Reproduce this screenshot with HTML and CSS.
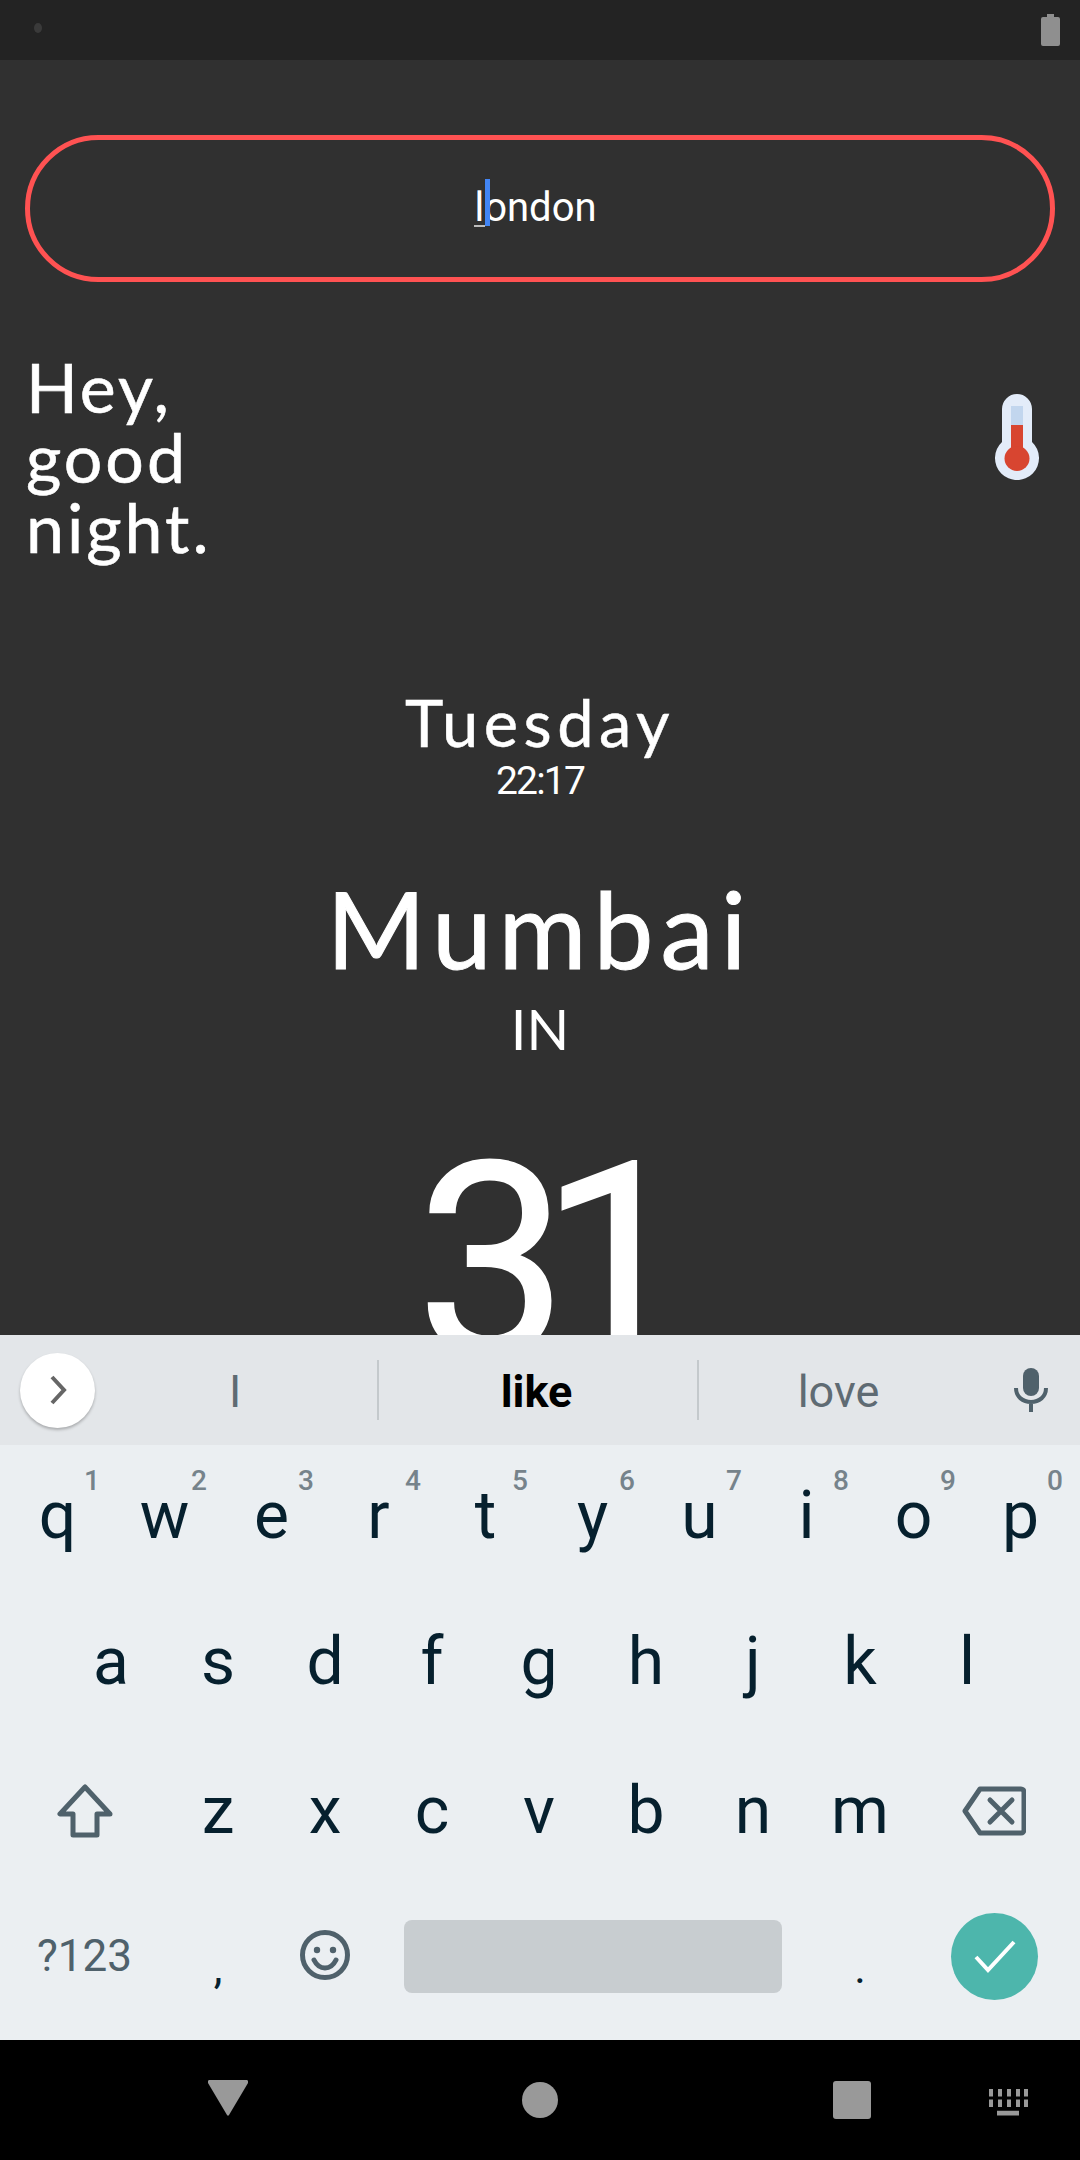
FILE: index.html
```html
<!DOCTYPE html>
<html lang="en">
<head>
<meta charset="utf-8">
<title>Weather</title>
<link rel="stylesheet" href="styles.css">
</head>
<body>
<div class="screen">
  <header class="status">
    <span class="status-dot"></span>
    <svg class="battery" viewBox="0 0 19 32"><path d="M6 0h7v3h4a2 2 0 0 1 2 2v25a2 2 0 0 1-2 2H2a2 2 0 0 1-2-2V5a2 2 0 0 1 2-2h4z"/></svg>
  </header>
  <main class="app">
    <div class="search">
      <span class="search-text"><span class="composing">l<i class="caret"></i></span>ondon</span>
    </div>
    <section class="greeting">
      <h1 class="hello">Hey,<br>good<br>night.</h1>
      <svg class="thermo" viewBox="0 0 44 86">
        <path class="th-case" d="M7 48V15a15 15 0 0 1 30 0v33a22 22 0 1 1-30 0z"/>
        <rect class="th-glass" x="16" y="12" width="12" height="20"/>
        <rect class="th-red" x="16" y="31" width="12" height="30"/>
        <circle class="th-red" cx="22" cy="64.500" r="12.500"/>
      </svg>
    </section>
    <div class="day">Tuesday</div>
    <div class="time">22:17</div>
    <div class="city">Mumbai</div>
    <div class="country">IN</div>
    <div class="temp">31</div>
  </main>
  <section class="keyboard">
    <div class="strip">
      <span class="more"><svg class="chev" viewBox="0 0 18 30"><path d="M3 2l12 13L3 28"/></svg></span>
      <span class="sugg sugg-a">I</span>
      <span class="sugg sugg-b">like</span>
      <span class="sugg sugg-c">love</span>
      <span class="mic-cell"><svg class="mic" viewBox="0 0 34 44"><rect x="9" y="0" width="16" height="28" rx="8"/><path class="mic-arc" d="M2 20c0 9 7 14 15 14s15-5 15-14M17 34v10"/></svg></span>
    </div>
    <div class="keys">
      <div class="row row-1">
        <span class="key">q<b class="hint">1</b></span><span class="key">w<b class="hint">2</b></span><span class="key">e<b class="hint">3</b></span><span class="key">r<b class="hint">4</b></span><span class="key">t<b class="hint">5</b></span><span class="key">y<b class="hint">6</b></span><span class="key">u<b class="hint">7</b></span><span class="key">i<b class="hint">8</b></span><span class="key">o<b class="hint">9</b></span><span class="key">p<b class="hint">0</b></span>
      </div>
      <div class="row row-2">
        <span class="key">a</span><span class="key">s</span><span class="key">d</span><span class="key">f</span><span class="key">g</span><span class="key">h</span><span class="key">j</span><span class="key">k</span><span class="key">l</span>
      </div>
      <div class="row row-3">
        <span class="key key-wide"><svg class="shift" viewBox="0 0 56 54"><path d="M28 3L3 30h13v21h24V30h13z"/></svg></span>
        <span class="key">z</span><span class="key">x</span><span class="key">c</span><span class="key">v</span><span class="key">b</span><span class="key">n</span><span class="key">m</span>
        <span class="key key-wide"><svg class="back" viewBox="0 0 64 50"><path class="ln" d="M18 3h41a3 3 0 0 1 3 3v38a3 3 0 0 1-3 3H18L3 25z"/><path class="ln" d="M28 14l22 22M50 14L28 36"/></svg></span>
      </div>
      <div class="row row-4">
        <span class="key key-wide key-sym">?123</span>
        <span class="key key-punct">,</span>
        <span class="key"><svg class="emoji" viewBox="0 0 50 50"><circle class="ln" cx="25" cy="25" r="22.500"/><circle class="eye" cx="17" cy="20" r="3.200"/><circle class="eye" cx="33" cy="20" r="3.200"/><path class="ln" d="M14 30c3 6 7 8 11 8s8-2 11-8"/></svg></span>
        <span class="space-cell"><span class="spacebar"></span></span>
        <span class="key key-punct">.</span>
        <span class="key key-wide key-enter"><span class="enter"><svg class="check" viewBox="0 0 44 36"><path d="M3 19l12 13L41 4"/></svg></span></span>
      </div>
    </div>
  </section>
  <nav class="navbar">
    <svg class="nav-back" viewBox="0 0 40 36"><path d="M2 0h36a2 2 0 0 1 2 3L21 35a1.200 1.200 0 0 1-2 0L0 3a2 2 0 0 1 2-3z"/></svg>
    <span class="nav-home"></span>
    <span class="nav-recent"></span>
    <svg class="nav-kbd" viewBox="0 0 39 27"><path d="M0 0h4v8H0zM9 0h4v8H9zM18 0h4v8h-4zM27 0h4v8h-4zM35 0h4v8h-4zM0 11h4v8H0zM9 11h4v8H9zM18 11h4v8h-4zM27 11h4v8h-4zM35 11h4v8h-4zM8 23h22v5H8z" transform="scale(1 .95)"/></svg>
  </nav>
</div>
</body>
</html>
```
FILE: styles.css
```css
* { box-sizing: border-box; }
html, body { margin: 0; padding: 0; }
body { width: 1080px; height: 2160px; overflow: hidden; background: #303030; }
.screen { width: 1080px; height: 2160px; display: flex; flex-direction: column; font-family: Roboto, sans-serif; }

.status { height: 60px; flex: none; background: #232323; display: flex; align-items: center; justify-content: space-between; padding: 0 20px 0 34px; }
.status-dot { width: 8px; height: 10px; border-radius: 50%; background: #3a3a3a; margin-bottom: 4px; }
.battery { width: 19px; height: 32px; fill: #8f8f8f; margin-bottom: 1px; }

.app { height: 1275px; flex: none; overflow: hidden; background: #303030; color: #fff; display: flex; flex-direction: column; align-items: center; padding-top: 75px; }
.search { width: 1030px; height: 147px; flex: none; border: 5px solid #ff5252; border-radius: 74px; display: flex; align-items: center; justify-content: center; padding: 0 9px 0 0; }
.search-text { font-size: 40px; line-height: 48px; margin-top: -1px; }
.composing { position: relative; display: inline-block; }
.composing::after { content: ""; position: absolute; left: 0; right: -1px; bottom: 5px; height: 2px; background: #bdbdbd; }
.caret { position: absolute; right: -6px; top: -5px; width: 5px; height: 47px; background: #4285f4; }

.greeting { width: 100%; flex: none; display: flex; justify-content: space-between; padding: 70px 41px 0 26px; }
.hello { margin: 0; font-family: Lato, sans-serif; font-weight: 400; font-size: 68px; line-height: 70px; letter-spacing: 3px; -webkit-text-stroke: 0.6px #fff; }
.thermo { width: 44px; height: 86px; margin-top: 42px; }
.th-case { fill: #e3ecf9; }
.th-glass { fill: #c2d6ee; }
.th-red { fill: #d84530; }

.day { font-family: Lato, sans-serif; font-size: 65px; line-height: 70px; letter-spacing: 5.5px; margin-top: 125px; -webkit-text-stroke: 0.5px #fff; }
.time { font-size: 39px; line-height: 44px; letter-spacing: -1.8px; margin-top: 2px; }
.city { font-family: Lato, sans-serif; font-size: 107px; line-height: 120px; letter-spacing: 7px; margin-top: 65px; -webkit-text-stroke: 1px #fff; }
.country { font-family: Lato, sans-serif; font-size: 56px; line-height: 60px; margin-top: 11px; }
.temp { font-size: 270px; line-height: 300px; margin-top: 53px; letter-spacing: -28px; -webkit-text-stroke: 2px #fff; }

.keyboard { height: 705px; flex: none; background: #ebeff2; display: flex; flex-direction: column; }
.strip { height: 110px; flex: none; background: #e3e6e9; display: flex; align-items: center; }
.more { width: 75px; height: 75px; flex: none; margin-left: 20px; border-radius: 50%; background: #fff; box-shadow: 0 2px 3px rgba(0,0,0,.25); display: flex; align-items: center; justify-content: center; }
.chev { width: 18px; height: 30px; fill: none; stroke: #666; stroke-width: 4; }
.sugg { height: 60px; display: flex; align-items: center; justify-content: center; font-size: 45px; line-height: 60px; color: #5f6b73; padding: 3px 2px 0 0; }
.sugg-a { width: 284px; border-right: 2px solid #c4c9cc; }
.sugg-b { width: 320px; border-right: 2px solid #c4c9cc; color: #000; font-weight: 700; padding-right: 3px; }
.sugg-c { width: 282px; padding-right: 3px; }
.mic-cell { flex: 1; display: flex; justify-content: center; }
.mic { width: 34px; height: 44px; fill: #4f616b; }
.mic-arc { fill: none; stroke: #4f616b; stroke-width: 4; }

.keys { flex: 1; padding: 0 6px 0 4px; color: #06202e; font-size: 66px; }
.row { display: flex; justify-content: center; }
.row-1 { height: 149px; padding-bottom: 8px; }
.row-2 { height: 147px; padding-bottom: 11px; }
.row-3 { height: 141px; padding-bottom: 2px; }
.row-4 { height: 158px; padding-bottom: 10px; }
.key { width: 107px; flex: none; height: 100%; display: flex; align-items: center; justify-content: center; position: relative; line-height: 80px; }
.key-wide { width: 160px; }
.key-enter { padding-left: 2px; }
.hint { position: absolute; right: 11px; top: 21px; font-size: 28px; line-height: 30px; font-weight: 500; color: #76838b; }
.key-sym { font-size: 44px; color: #4f616b; }
.key-punct { font-size: 44px; padding-top: 24px; }
.space-cell { width: 428px; flex: none; display: flex; align-items: center; justify-content: center; }
.spacebar { width: 378px; height: 73px; background: #c8cdd0; border-radius: 8px; }

.shift { width: 56px; height: 54px; fill: none; stroke: #4f616b; stroke-width: 5; stroke-linejoin: round; }
.back { width: 64px; height: 50px; }
.ln { fill: none; stroke: #4f616b; stroke-width: 5; stroke-linejoin: round; stroke-linecap: round; }
.emoji { width: 50px; height: 50px; margin-top: -3px; }
.eye { fill: #4f616b; }
.enter { width: 87px; height: 87px; border-radius: 50%; background: #4db6ac; display: flex; align-items: center; justify-content: center; }
.check { width: 44px; height: 36px; fill: none; stroke: #fff; stroke-width: 4; }

.navbar { height: 120px; flex: none; background: #000; display: flex; align-items: center; }
.nav-back { width: 40px; height: 36px; fill: #999; margin-left: 208px; margin-top: -4px; }
.nav-home { width: 36px; height: 36px; border-radius: 50%; background: #999; margin-left: 274px; }
.nav-recent { width: 38px; height: 38px; border-radius: 3px; background: #999; margin-left: 275px; }
.nav-kbd { width: 39px; height: 27px; fill: #999; margin-left: 118px; margin-top: 4px; }
```
